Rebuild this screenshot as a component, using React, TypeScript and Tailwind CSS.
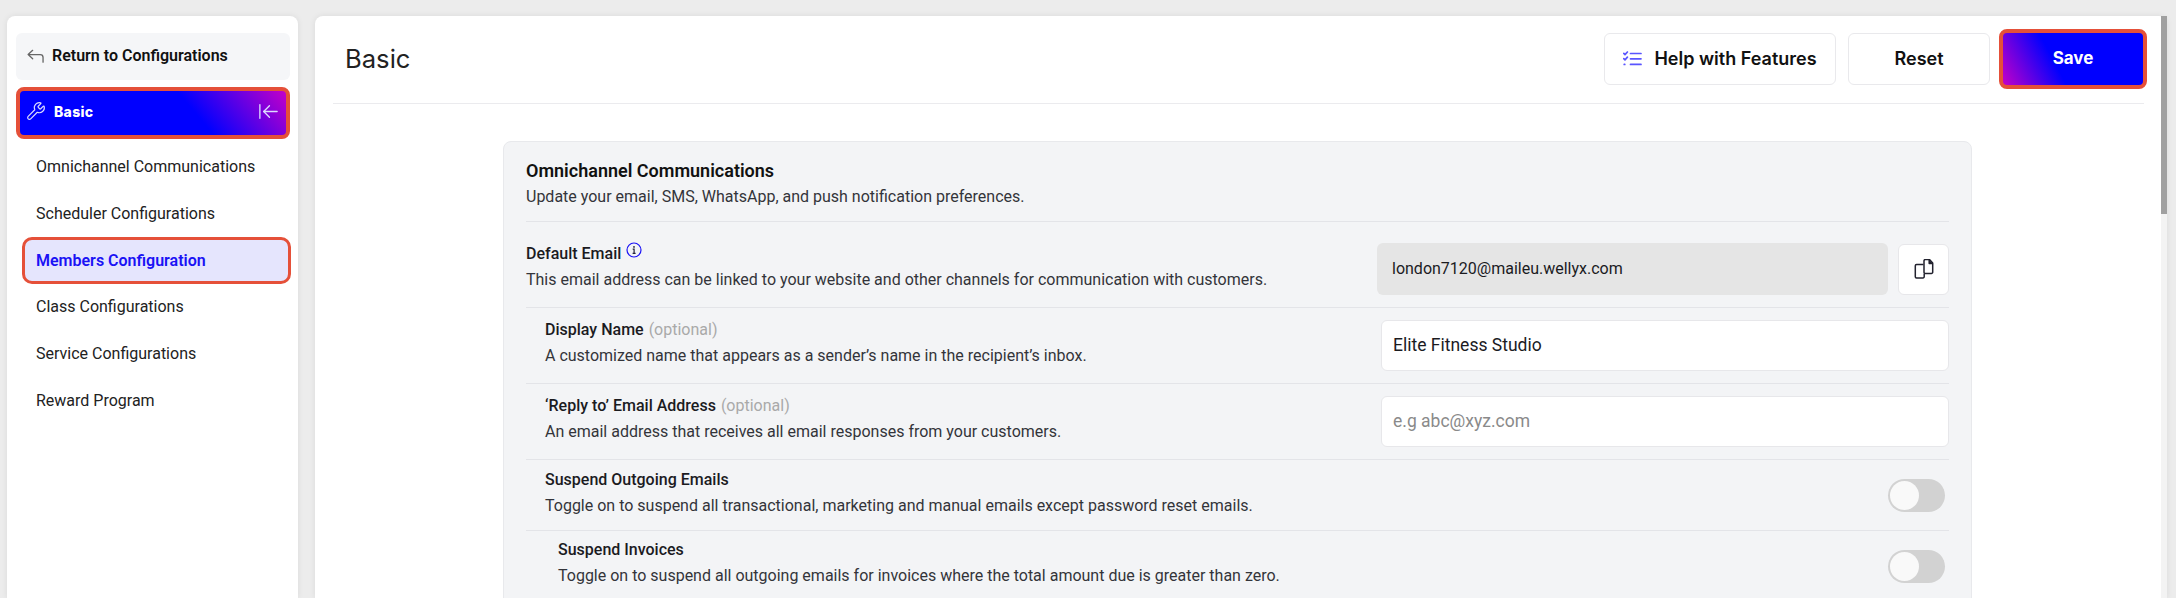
import { ArrowLeftToLine, Wrench } from "lucide-react";

const navItems = [
  "Omnichannel Communications",
  "Scheduler Configurations",
  "Members Configuration",
  "Class Configurations",
  "Service Configurations",
  "Reward Program",
];

function ReturnIcon() {
  return (
    <svg viewBox="0 0 18 14" className="h-[14px] w-[17px]" fill="none" stroke="#666" strokeWidth="1.4" strokeLinecap="round" strokeLinejoin="round">
      <path d="M6 1 1.2 5.5 6 10M1.2 5.5H14a3 3 0 0 1 3 3V13.5" />
    </svg>
  );
}

function Sidebar() {
  return (
    <aside className="w-[291px] shrink-0 rounded-t-lg bg-white pl-[9px] pr-[8px] pt-[17px] shadow-[0_0_6px_rgba(0,0,0,0.08)]">
      <div className="flex h-[47px] items-center gap-2 rounded-md bg-[#f5f6f8] pb-[2px] pl-[11px] text-[16px] font-semibold text-[#111]">
        <ReturnIcon />
        Return to Configurations
      </div>
      <div className="mt-[7px] flex h-[52px] items-center justify-between rounded-lg border-[4px] border-[#e55039] bg-[linear-gradient(50deg,#0000ff_64%,#c400c8_100%)] pb-[4px] pl-[6px] pr-[6px] text-white">
        <span className="flex items-center gap-[8px] font-['Inter',sans-serif] text-[14px] font-extrabold tracking-[0.3px]">
          <Wrench className="h-[20px] w-[20px] text-[#dcdcff]" strokeWidth={1.4} />
          Basic
        </span>
        <ArrowLeftToLine className="h-[23px] w-[23px] text-[#dcdcff]" strokeWidth={1.4} />
      </div>
      <nav className="mt-[5px] flex flex-col">
        {navItems.map((item) =>
          item === "Members Configuration" ? (
            <div
              key={item}
              className="ml-[6px] mr-[-1px] flex h-[46.7px] items-center rounded-[10px] border-[3px] border-[#e55039] bg-[#e5e5fd] pl-[11px] text-[16px] font-semibold text-[#1a12f5]"
            >
              {item}
            </div>
          ) : (
            <div key={item} className="flex h-[46.7px] items-center pl-[20px] text-[16px] text-[#222]">
              {item}
            </div>
          ),
        )}
      </nav>
    </aside>
  );
}

function ChecklistIcon() {
  return (
    <svg viewBox="0 0 19 15" className="h-[15px] w-[19px]" fill="none" stroke="#5a55ff" strokeWidth="1.7" strokeLinecap="round" strokeLinejoin="round">
      <path d="M.8 2.4 2 3.6 4.4 1M.8 7.6 2 8.8 4.4 6.2M1.2 13.4h.6M7.5 2.5h10.5M7.5 7.8h10.5M7.5 13.4h10.5" />
    </svg>
  );
}

function CopyIcon() {
  return (
    <svg viewBox="0 0 20 20" className="h-[20px] w-[20px]" fill="none" stroke="#22222e" strokeWidth="1.5" strokeLinejoin="round">
      <path d="M9.5 5.5H2.5a1.2 1.2 0 0 0-1.2 1.2v11a1.2 1.2 0 0 0 1.2 1.2h6.5a1.2 1.2 0 0 0 1.2-1.2V14.5" />
      <path d="M10 1.8a1.2 1.2 0 0 1 1.2-1.2h4.3l3.2 3.4v9.2a1.2 1.2 0 0 1-1.2 1.2h-6.3a1.2 1.2 0 0 1-1.2-1.2z" />
      <path d="M15.2.8v3.6h3.4" fill="#22222e" />
    </svg>
  );
}

function InfoIcon() {
  return (
    <svg viewBox="0 0 16 16" className="mb-[8px] ml-[5px] h-[16px] w-[16px]" fill="none">
      <circle cx="8" cy="8" r="7" stroke="#1a12f5" strokeWidth="1.2" />
      <path d="M6.7 7.2H8.1V11.4M6.6 11.4H9.6" stroke="#24243a" strokeWidth="1.2" />
      <circle cx="8" cy="4.9" r="0.9" fill="#24243a" />
    </svg>
  );
}

function Toggle() {
  return (
    <div className="mr-[4px] flex h-[33px] w-[57px] items-center rounded-full bg-[#d2d2d2] pl-[2px]">
      <div className="h-[29px] w-[29px] rounded-full bg-[#f9f9f9]" />
    </div>
  );
}

function Input({ value, placeholder }: { value?: string; placeholder?: string }) {
  return (
    <div
      className={`flex h-[51px] w-[568px] items-center rounded-md border border-[#e7e7ea] bg-white pl-[11px] text-[17.5px] ${
        value ? "text-[#1b1b1f]" : "text-[#8a8a8a]"
      }`}
    >
      {value ?? placeholder}
    </div>
  );
}

function Row({
  title,
  hint,
  desc,
  info,
  className,
  textTop,
  children,
}: {
  title: string;
  hint?: string;
  desc: string;
  info?: boolean;
  className: string;
  textTop: string;
  children: React.ReactNode;
}) {
  return (
    <div className={`flex items-center justify-between border-b border-[#e3e4e8] ${className}`}>
      <div className={`self-start ${textTop}`}>
        <div className="flex h-[26px] items-center text-[16px] font-medium text-[#1b1b1f]">
          {title}
          {hint && <span className="ml-[5px] font-normal text-[#a9a9a9]">{hint}</span>}
          {info && <InfoIcon />}
        </div>
        <p className="text-[16px] leading-[26px] text-[#33343a]">{desc}</p>
      </div>
      {children}
    </div>
  );
}

function HeaderButton({ children, width }: { children: React.ReactNode; width: string }) {
  return (
    <button className={`flex h-[52px] items-center justify-center gap-[12px] rounded-md border border-[#e9e9ec] bg-white font-['Inter',sans-serif] text-[18px] font-semibold text-[#111] ${width}`}>
      {children}
    </button>
  );
}

export default function App() {
  return (
    <div className="flex h-[598px] gap-[17px] overflow-hidden bg-[#ececec] pl-[7px] pr-[9px] pt-[16px] font-['Roboto',sans-serif]">
      <Sidebar />
      <main className="flex min-w-0 flex-1 rounded-t-lg bg-white shadow-[0_0_6px_rgba(0,0,0,0.08)]">
        <div className="min-w-0 flex-1 pl-[18px] pr-[17px]">
          <header className="flex h-[88px] items-center justify-between border-b border-[#ebebee] pl-[12px]">
            <h1 className="font-['Inter',sans-serif] text-[25.6px] text-[#222]">Basic</h1>
            <div className="mt-[-2px] flex items-center">
              <HeaderButton width="w-[232px]">
                <ChecklistIcon />
                Help with Features
              </HeaderButton>
              <div className="ml-[12px]">
                <HeaderButton width="w-[142px]">Reset</HeaderButton>
              </div>
              <button className="ml-[9px] mr-[-3px] h-[60px] w-[148px] rounded-lg border-[4px] border-[#e55039] bg-[linear-gradient(242deg,#0000ff_62%,#c400c8_100%)] font-['Inter',sans-serif] text-[17px] font-bold text-white">
                Save
              </button>
            </div>
          </header>
          <section className="ml-[170px] mt-[37px] w-[1469px] rounded-t-lg border border-[#e8e9ec] bg-[#f3f4f6] pl-[22px] pr-[22px] pt-[15px]">
            <div className="h-[65px] border-b border-[#e3e4e8]">
              <h2 className="text-[18px] font-semibold leading-[28px] text-[#111]">Omnichannel Communications</h2>
              <p className="text-[16px] leading-[24px] text-[#33343a]">
                Update your email, SMS, WhatsApp, and push notification preferences.
              </p>
            </div>
            <Row
              title="Default Email"
              info
              desc="This email address can be linked to your website and other channels for communication with customers."
              className="h-[86px]"
              textTop="pt-[19px]"
            >
              <div className="mt-[9px] flex items-center gap-[10px]">
                <div className="flex h-[52px] w-[511px] items-center rounded-md bg-[#e5e5e5] pl-[15px] text-[16px] text-[#1b1b1f]">
                  london7120@maileu.wellyx.com
                </div>
                <div className="flex h-[51px] w-[51px] items-center justify-center rounded-md border border-[#e7e7ea] bg-white">
                  <CopyIcon />
                </div>
              </div>
            </Row>
            <Row
              title="Display Name"
              hint="(optional)"
              desc="A customized name that appears as a sender’s name in the recipient’s inbox."
              className="h-[76px] pl-[19px]"
              textTop="pt-[9px]"
            >
              <Input value="Elite Fitness Studio" />
            </Row>
            <Row
              title="‘Reply to’ Email Address"
              hint="(optional)"
              desc="An email address that receives all email responses from your customers."
              className="h-[76px] pl-[19px]"
              textTop="pt-[9px]"
            >
              <Input placeholder="e.g abc@xyz.com" />
            </Row>
            <Row
              title="Suspend Outgoing Emails"
              desc="Toggle on to suspend all transactional, marketing and manual emails except password reset emails."
              className="h-[71px] pl-[19px]"
              textTop="pt-[7px]"
            >
              <Toggle />
            </Row>
            <Row
              title="Suspend Invoices"
              desc="Toggle on to suspend all outgoing emails for invoices where the total amount due is greater than zero."
              className="h-[71px] pl-[32px]"
              textTop="pt-[6px]"
            >
              <Toggle />
            </Row>
          </section>
        </div>
        <div className="w-[6px] shrink-0 bg-[#f3f3f3]">
          <div className="h-[198px] bg-[#a0a0a0]" />
        </div>
      </main>
    </div>
  );
}
